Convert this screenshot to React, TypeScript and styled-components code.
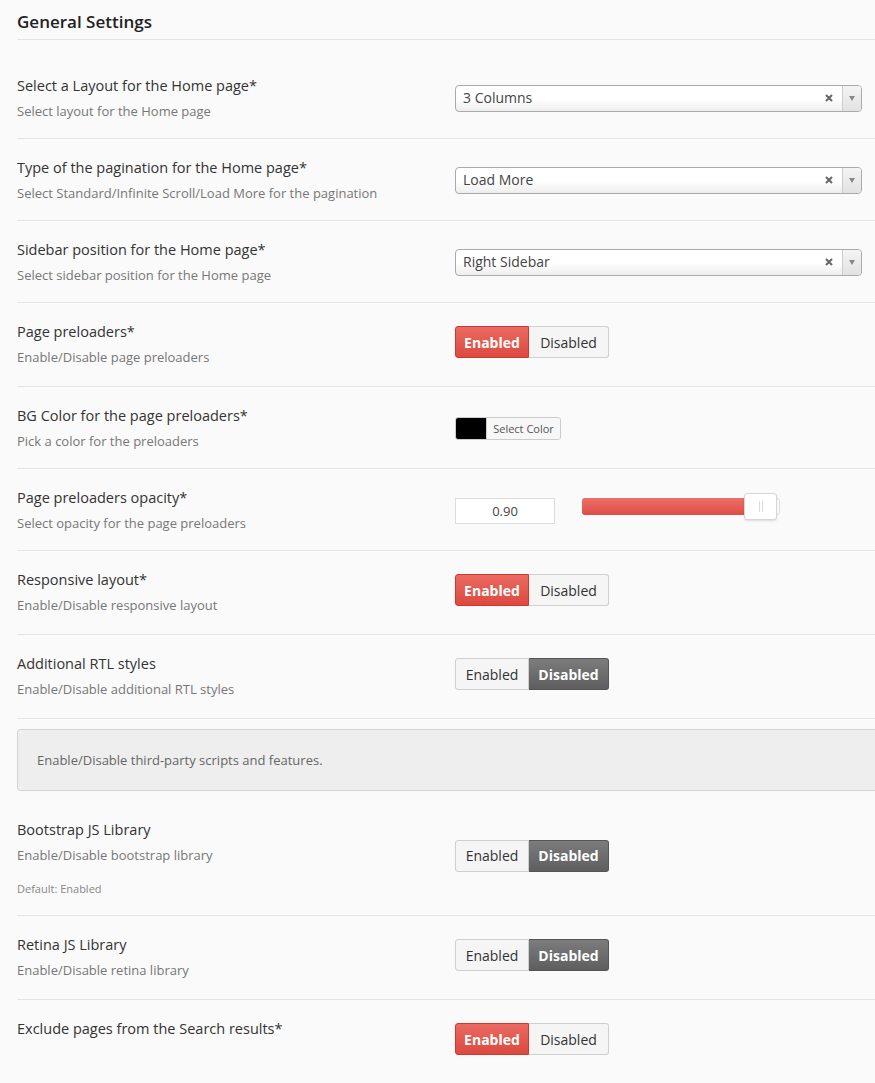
import React from 'react';
import styled, { createGlobalStyle } from 'styled-components';

const GlobalStyle = createGlobalStyle`
  html, body {
    margin: 0;
    padding: 0;
    background: #fafafa;
    font-family: "Open Sans", "Liberation Sans", Arial, sans-serif;
    color: #333;
  }
`;

const Page = styled.div`
  width: 875px;
  padding-left: 17px;
  box-sizing: border-box;
  overflow: hidden;
`;

const SectionTitle = styled.h2`
  margin: 0 0 17px;
  padding: 10px 0 5px;
  font-size: 17px;
  line-height: 24px;
  font-weight: 600;
  color: #222;
  border-bottom: 1px solid #e5e5e5;
`;

const Row = styled.div<{ last?: boolean }>`
  display: grid;
  grid-template-columns: 438px 1fr;
  align-items: center;
  padding: 20px 0 18px;
  border-bottom: 1px solid ${({ last }) => (last ? 'transparent' : '#e5e5e5')};
`;

const Label = styled.div`
  align-self: start;
  display: flex;
  flex-direction: column;
`;

const Title = styled.div`
  font-size: 14.5px;
  line-height: 18px;
  color: #333;
`;

const Desc = styled.div`
  margin-top: 7px;
  font-size: 13px;
  line-height: 18px;
  color: #777;
`;

const Note = styled.div`
  margin-top: 17px;
  font-size: 11px;
  line-height: 16px;
  color: #888;
`;

const Control = styled.div`
  display: flex;
  align-items: center;
`;

/* select box */
const SelectBox = styled.div`
  width: 407px;
  height: 27px;
  margin-top: -1px;
  box-sizing: border-box;
  display: flex;
  align-items: stretch;
  border: 1px solid #aaa;
  border-radius: 4px;
  background: linear-gradient(to bottom, #ffffff 0%, #ffffff 50%, #eeeeee 100%);
  font-size: 14px;
  color: #444;
`;

const SelectValue = styled.span`
  flex: 1;
  padding-left: 7px;
  line-height: 24px;
`;

const SelectClear = styled.span`
  width: 26px;
  display: flex;
  align-items: center;
  justify-content: center;
  color: #666;
`;

const SelectArrow = styled.span`
  width: 18px;
  display: flex;
  align-items: center;
  justify-content: center;
  border-left: 1px solid #ccc;
  border-radius: 0 3px 3px 0;
  background: linear-gradient(to bottom, #f4f4f4, #e2e2e2);
  &::after {
    content: '';
    border-left: 3px solid transparent;
    border-right: 3px solid transparent;
    border-top: 5px solid #888;
  }
`;

/* enabled / disabled switch */
const Toggle = styled.div`
  display: flex;
  margin: 3px 0 10px;
`;

const ToggleButton = styled.span<{ active: boolean; tone: 'red' | 'gray'; side: 'left' | 'right' }>`
  height: 32px;
  box-sizing: border-box;
  display: flex;
  align-items: center;
  justify-content: center;
  width: ${({ side }) => (side === 'left' ? '74px' : '80px')};
  font-size: 14px;
  border: 1px solid;
  border-radius: ${({ side }) => (side === 'left' ? '3px 0 0 3px' : '0 3px 3px 0')};
  ${({ side }) => (side === 'right' ? 'border-left: none;' : '')}
  font-weight: ${({ active }) => (active ? 700 : 400)};
  color: ${({ active }) => (active ? '#fff' : '#333')};
  background: ${({ active, tone }) =>
    !active
      ? '#f5f5f5'
      : tone === 'red'
      ? 'linear-gradient(to bottom, #ea6a62, #dc4a40)'
      : 'linear-gradient(to bottom, #7c7c7c, #5e5e5e)'};
  border-color: ${({ active, tone }) =>
    !active ? '#cfcfcf' : tone === 'red' ? '#d2372d' : '#555'};
`;

/* color picker */
const ColorPicker = styled.div`
  display: flex;
  height: 23px;
  border: 1px solid #ccc;
  border-radius: 3px;
  box-sizing: border-box;
  overflow: hidden;
`;

const Swatch = styled.span<{ color: string }>`
  width: 30px;
  background: ${({ color }) => color};
`;

const ColorButton = styled.span`
  width: 73px;
  display: flex;
  align-items: center;
  justify-content: center;
  background: #f7f7f7;
  border-left: 1px solid #ccc;
  font-size: 11px;
  color: #555;
`;

/* opacity slider */
const NumberBox = styled.div`
  width: 100px;
  height: 26px;
  box-sizing: border-box;
  border: 1px solid #ddd;
  background: #fff;
  display: flex;
  align-items: center;
  justify-content: center;
  font-size: 13px;
  color: #444;
`;

const Track = styled.div`
  position: relative;
  margin: 0 0 9px 27px;
  width: 198px;
  height: 17px;
  box-sizing: border-box;
  border: 1px solid #ddd;
  border-radius: 3px;
  background: #fff;
`;

const TrackFill = styled.div`
  margin: -1px 0 0 -1px;
  height: 17px;
  border-radius: 3px 0 0 3px;
  background: linear-gradient(to bottom, #ec7068, #dd4d44);
`;

const Handle = styled.div`
  position: absolute;
  top: -6px;
  width: 33px;
  height: 27px;
  box-sizing: border-box;
  border: 1px solid #d6d6d6;
  border-radius: 3px;
  background: #fff;
  box-shadow: 0 1px 2px rgba(0, 0, 0, 0.12);
  display: flex;
  align-items: center;
  justify-content: center;
  gap: 2px;
  &::before,
  &::after {
    content: '';
    width: 1px;
    height: 11px;
    background: #ddd;
  }
`;

const InfoBox = styled.div`
  margin: 10px -20px 10px 0;
  padding: 21px 19px;
  border: 1px solid #d4d4d4;
  border-radius: 3px;
  background: #eeeeee;
  font-size: 13px;
  line-height: 18px;
  color: #666;
`;

type ToggleValue = 'on' | 'off';

const Switch: React.FC<{ value: ToggleValue }> = ({ value }) => (
  <Toggle>
    <ToggleButton side="left" tone="red" active={value === 'on'}>
      Enabled
    </ToggleButton>
    <ToggleButton side="right" tone="gray" active={value === 'off'}>
      Disabled
    </ToggleButton>
  </Toggle>
);

const Select: React.FC<{ value: string }> = ({ value }) => (
  <SelectBox>
    <SelectValue>{value}</SelectValue>
    <SelectClear>
      <svg width="8" height="8" viewBox="0 0 8 8">
        <path d="M1 1L7 7M7 1L1 7" stroke="currentColor" strokeWidth="2" />
      </svg>
    </SelectClear>
    <SelectArrow />
  </SelectBox>
);

const Setting: React.FC<{
  title: string;
  desc?: string;
  note?: string;
  last?: boolean;
  children: React.ReactNode;
}> = ({ title, desc, note, last, children }) => (
  <Row last={last}>
    <Label>
      <Title>{title}</Title>
      {desc && <Desc>{desc}</Desc>}
      {note && <Note>{note}</Note>}
    </Label>
    <Control>{children}</Control>
  </Row>
);

const opacity = 0.9;

export default function App() {
  return (
    <>
      <GlobalStyle />
      <Page>
        <SectionTitle>General Settings</SectionTitle>

        <Setting title="Select a Layout for the Home page*" desc="Select layout for the Home page">
          <Select value="3 Columns" />
        </Setting>
        <Setting
          title="Type of the pagination for the Home page*"
          desc="Select Standard/Infinite Scroll/Load More for the pagination"
        >
          <Select value="Load More" />
        </Setting>
        <Setting title="Sidebar position for the Home page*" desc="Select sidebar position for the Home page">
          <Select value="Right Sidebar" />
        </Setting>
        <Setting title="Page preloaders*" desc="Enable/Disable page preloaders">
          <Switch value="on" />
        </Setting>
        <Setting title="BG Color for the page preloaders*" desc="Pick a color for the preloaders">
          <ColorPicker>
            <Swatch color="#000" />
            <ColorButton>Select Color</ColorButton>
          </ColorPicker>
        </Setting>
        <Setting title="Page preloaders opacity*" desc="Select opacity for the page preloaders">
          <NumberBox>{opacity.toFixed(2)}</NumberBox>
          <Track>
            <TrackFill style={{ width: `${opacity * 100 - 2}%` }} />
            <Handle style={{ left: `calc(${opacity * 100}% - 15px)` }} />
          </Track>
        </Setting>
        <Setting title="Responsive layout*" desc="Enable/Disable responsive layout">
          <Switch value="on" />
        </Setting>
        <Setting title="Additional RTL styles" desc="Enable/Disable additional RTL styles">
          <Switch value="off" />
        </Setting>

        <InfoBox>Enable/Disable third-party scripts and features.</InfoBox>

        <Setting title="Bootstrap JS Library" desc="Enable/Disable bootstrap library" note="Default: Enabled">
          <Switch value="off" />
        </Setting>
        <Setting title="Retina JS Library" desc="Enable/Disable retina library">
          <Switch value="off" />
        </Setting>
        <Setting title="Exclude pages from the Search results*" last>
          <Switch value="on" />
        </Setting>
      </Page>
    </>
  );
}
